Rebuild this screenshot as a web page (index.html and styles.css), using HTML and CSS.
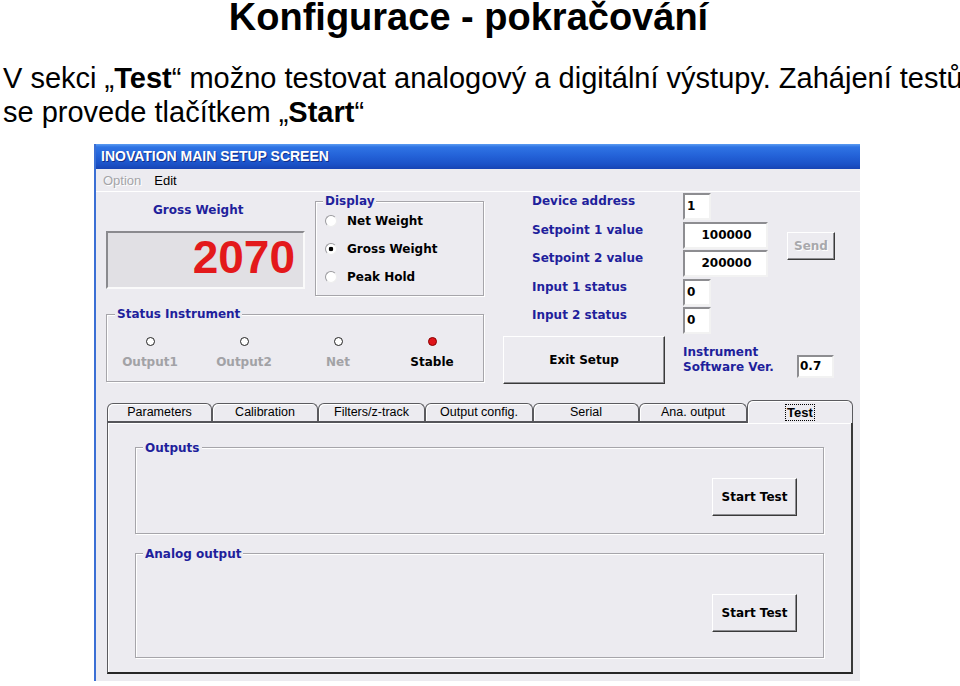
FILE: index.html
```html
<!DOCTYPE html>
<html lang="cs">
<head>
<meta charset="utf-8">
<title>Konfigurace - pokračování</title>
<link rel="stylesheet" href="styles.css">
</head>
<body>
<h1 class="title">Konfigurace - pokračování</h1>
<p class="lead">V sekci „<b>Test</b>“ možno testovat analogový a digitální výstupy. Zahájení testů<br>se provede tlačítkem „<b>Start</b>“</p>
<div class="window">
  <div class="titlebar">INOVATION MAIN SETUP SCREEN</div>
  <div class="menubar"><span class="menu disabled">Option</span><span class="menu">Edit</span></div>
  <div class="top">
    <div class="left">
      <div class="row">
        <div class="weight">
          <div class="weight-label">Gross Weight</div>
          <div class="readout">2070</div>
        </div>
        <fieldset class="group display">
          <legend>Display</legend>
          <div class="radios">
            <div class="radio"><span class="circle"></span>Net Weight</div>
            <div class="radio"><span class="circle on"></span>Gross Weight</div>
            <div class="radio"><span class="circle"></span>Peak Hold</div>
          </div>
        </fieldset>
      </div>
      <fieldset class="group status">
        <legend class="legend-status">Status Instrument</legend>
        <div class="leds">
          <div class="led"><span class="lamp"></span><span class="led-label">Output1</span></div>
          <div class="led"><span class="lamp"></span><span class="led-label">Output2</span></div>
          <div class="led"><span class="lamp"></span><span class="led-label">Net</span></div>
          <div class="led"><span class="lamp red"></span><span class="led-label active">Stable</span></div>
        </div>
      </fieldset>
    </div>
    <div class="right">
      <div class="fields">
        <span class="flabel">Device address</span><span class="box narrow">1</span>
        <span class="flabel">Setpoint 1 value</span><span class="box wide">100000</span>
        <span class="flabel">Setpoint 2 value</span><span class="box wide">200000</span>
        <span class="flabel">Input 1 status</span><span class="box narrow">0</span>
        <span class="flabel">Input 2 status</span><span class="box narrow">0</span>
        <button class="btn send" type="button">Send</button>
      </div>
      <div class="bottom-row">
        <button class="btn exit" type="button">Exit Setup</button>
        <div class="ver-label">Instrument<br>Software Ver.</div>
        <span class="box ver">0.7</span>
      </div>
    </div>
  </div>
  <div class="tabs">
    <div class="tab w105">Parameters</div>
    <div class="tab w106">Calibration</div>
    <div class="tab w107">Filters/z-track</div>
    <div class="tab w108">Output config.</div>
    <div class="tab w106">Serial</div>
    <div class="tab w108">Ana. output</div>
    <div class="tab w106 active"><span class="focus">Test</span></div>
  </div>
  <div class="panel">
    <fieldset class="group inner outputs">
      <legend>Outputs</legend>
      <div class="btn-row"><button class="btn start" type="button">Start Test</button></div>
    </fieldset>
    <fieldset class="group inner analog">
      <legend>Analog output</legend>
      <div class="btn-row"><button class="btn start" type="button">Start Test</button></div>
    </fieldset>
  </div>
</div>
</body>
</html>
```

FILE: styles.css
```css
* { box-sizing: border-box; }
html, body { margin: 0; padding: 0; background: #fff; }
body {
  width: 960px;
  height: 686px;
  overflow: hidden;
  font-family: "Liberation Sans", Arial, sans-serif;
  color: #000;
}
.title {
  margin: -2px 0 0;
  height: 38px;
  font-size: 38px;
  line-height: 38px;
  font-weight: bold;
  text-align: center;
  padding-right: 23px;
}
.lead {
  margin: 25px 0 0;
  padding-left: 3px;
  font-size: 29px;
  line-height: 34px;
  white-space: nowrap;
}

/* window */
.window {
  margin: 15px 0 0 94px;
  width: 766px;
  height: 537px;
  border-left: 2px solid #3b6fd4;
  background: #ecebf0;
  font-family: "DejaVu Sans", sans-serif;
  font-size: 12px;
}
.titlebar {
  height: 25px;
  padding-left: 5px;
  background: linear-gradient(#5c9cf2 0, #2f74e4 12%, #2463d9 45%, #1b52c8 80%, #1744b4 100%);
  color: #fff;
  font-family: "Liberation Sans", Arial, sans-serif;
  font-weight: bold;
  font-size: 14px;
  line-height: 25px;
  text-shadow: 1px 1px 0 #13308a;
}
.menubar {
  height: 23px;
  display: flex;
  align-items: center;
  gap: 13px;
  padding-left: 7px;
  border-bottom: 1px solid #fff;
  font-family: "Liberation Sans", Arial, sans-serif;
  font-size: 13px;
}
.menu.disabled { color: #a4a4a8; text-shadow: 1px 1px 0 #fff; }

.top { display: flex; padding: 1px 0 0 10px; }
.left { width: 378px; }
.row { display: flex; }
.weight { width: 199px; margin-right: 10px; }
.weight-label {
  margin-top: 9px;
  padding-left: 47px;
  line-height: 16px;
  font-weight: bold;
  color: #1f1f9c;
}
.readout {
  margin-top: 13px;
  height: 58px;
  border: 2px solid;
  border-color: #8a8a8e #fafafa #fafafa #8a8a8e;
  background: #e1e0e4;
  text-align: right;
  padding-right: 8px;
  font-family: "Liberation Sans", Arial, sans-serif;
  font-weight: bold;
  font-size: 46px;
  line-height: 48px;
  color: #e3191b;
}

/* group boxes */
.group {
  margin: 0;
  padding: 0;
  min-width: 0;
  border: 1px solid #a6a5aa;
  box-shadow: 1px 1px 0 #fff, inset 1px 1px 0 #fff;
}
.group legend {
  margin-left: 7px;
  padding: 0 2px;
  line-height: 16px;
  font-weight: bold;
  color: #1f1f9c;
  background: #ecebf0;
}
.display { width: 169px; height: 103px; }
.radios { margin-top: -2px; padding-left: 9px; }
.radio {
  height: 28px;
  display: flex;
  align-items: center;
  gap: 10px;
  font-weight: bold;
}
.circle {
  width: 12px;
  height: 12px;
  border-radius: 50%;
  border: 1px solid;
  border-color: #9a9a9e #eeeeee #eeeeee #9a9a9e;
  background: #fff;
}
.circle.on { background: radial-gradient(circle, #000 0 2px, #fff 2.6px); }

.status { margin-top: 10px; width: 378px; height: 76px; }
.status .legend-status { margin-left: 8px; }
.leds {
  display: grid;
  grid-template-columns: repeat(4, 60px);
  column-gap: 34px;
  padding: 15px 0 0 13px;
}
.led { display: flex; flex-direction: column; align-items: center; }
.lamp {
  width: 9px;
  height: 9px;
  border-radius: 50%;
  border: 1px solid #222;
  background: #fff;
}
.lamp.red { background: #e0141a; border-color: #8a0000; }
.led-label {
  margin-top: 9px;
  line-height: 14px;
  font-weight: bold;
  font-size: 12px;
  color: #a2a2a6;
}
.led-label.active { color: #000; }

/* right side */
.right { width: 376px; display: flex; flex-direction: column; }
.fields {
  display: grid;
  grid-template-columns: 151px 104px 48px;
  grid-auto-rows: 28.5px;
  margin-left: 48px;
}
.flabel {
  grid-column: 1;
  line-height: 16px;
  font-weight: bold;
  color: #1f1f9c;
  white-space: nowrap;
}
.box {
  height: 27px;
  background: #fff;
  border: 2px solid;
  border-color: #8d8d91 #f2f2f2 #f2f2f2 #8d8d91;
  font-weight: bold;
  line-height: 23px;
  padding-left: 2px;
}
.fields .box { grid-column: 2; }
.box.narrow { width: 28px; }
.box.wide { width: 85px; text-align: center; }

.btn {
  padding: 0;
  background: #ecebf0;
  border: 1px solid;
  border-color: #fff #3a3a3a #3a3a3a #fff;
  box-shadow: inset -1px -1px 0 #8e8e92;
  font-family: "DejaVu Sans", sans-serif;
  font-weight: bold;
  font-size: 12px;
  color: #000;
}
.send {
  grid-column: 3;
  grid-row: 2 / span 2;
  align-self: start;
  margin-top: 10.5px;
  width: 48px;
  height: 28px;
  color: #a8a8ac;
  text-shadow: 1px 1px 0 #fff;
}
.bottom-row { display: flex; align-items: flex-start; }
.exit { margin-left: 19px; width: 162px; height: 48px; }
.ver-label {
  margin: 9px 0 0 18px;
  width: 114px;
  line-height: 15px;
  font-weight: bold;
  color: #1f1f9c;
}
.box.ver { margin-top: 19px; width: 37px; height: 23px; line-height: 19px; padding-left: 1px; }

/* tabs */
.tabs {
  display: flex;
  align-items: flex-end;
  margin: 16px 0 0 11px;
  width: 746px;
  height: 21px;
}
.tab {
  height: 18px;
  border: 1px solid #5b5b5f;
  border-bottom: none;
  border-radius: 6px 6px 0 0;
  box-shadow: inset 1px 1px 0 #fff;
  text-align: center;
  font-family: "Liberation Sans", Arial, sans-serif;
  font-size: 12.5px;
  line-height: 17px;
}
.w105 { width: 105px; }
.w106 { width: 106px; }
.w107 { width: 107px; }
.w108 { width: 108px; }
.tab.active {
  position: relative;
  z-index: 1;
  height: 23px;
  margin-bottom: -2px;
  background: #ecebf0;
  font-weight: bold;
  font-size: 13px;
  line-height: 20px;
  padding-top: 2px;
}
.focus { border: 1px dotted #000; padding: 0 1px; }

.panel {
  margin-left: 11px;
  width: 746px;
  height: 253px;
  border-top: 2px solid #55555a;
  border-left: 1px solid #5b5b5f;
  border-right: 2px solid #3a3a3a;
  border-bottom: 2px solid #262626;
  box-shadow: inset 1px 1px 0 #fff;
  padding: 17px 27px 0 27px;
}
.inner { width: 689px; }
.outputs { height: 94px; }
.analog { height: 112px; margin-top: 12px; }
.btn-row { display: flex; justify-content: flex-end; padding-right: 26px; }
.outputs .btn-row { padding-top: 22px; }
.analog .btn-row { padding-top: 32px; }
.start { width: 85px; height: 38px; }
```
